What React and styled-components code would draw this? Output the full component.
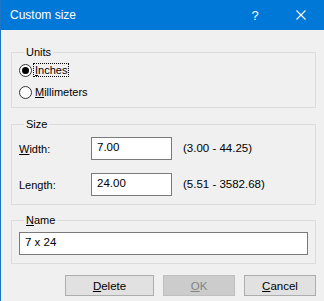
import React from 'react';
import styled, { createGlobalStyle } from 'styled-components';

/* Global */
const GlobalStyle = createGlobalStyle`
  html, body {
    margin: 0;
    padding: 0;
    background: #f0f0f0;
  }
  body {
    font-family: "Liberation Sans", Arial, sans-serif;
    font-size: 11px;
    color: #000;
  }
`;

/* Window chrome */
const Window = styled.div`
  width: 324px;
  height: 301px;
  box-sizing: border-box;
  border-left: 1px solid #1f75c4;
  background: #f0f0f0;
  display: flex;
  flex-direction: column;
  overflow: hidden;
`;
const TitleBar = styled.div`
  height: 30px;
  flex: none;
  display: flex;
  align-items: center;
  background: #0078d7;
  color: #fff;
  padding-left: 9px;
`;
const Title = styled.div`
  flex: 1;
  font-size: 12px;
`;
const CaptionButton = styled.div`
  width: 46px;
  height: 30px;
  display: flex;
  align-items: center;
  justify-content: center;
  font-size: 13px;
`;

/* Body */
const Body = styled.div`
  padding: 16px 8px 0 10px;
  display: flex;
  flex-direction: column;
`;
const Group = styled.fieldset`
  margin: ${p => p.$mt || 0}px 0 0 0;
  padding: ${p => p.$pt}px 7px ${p => p.$pb}px 7px;
  border: 1px solid #dcdcdc;
  min-width: 0;
`;
const Legend = styled.legend`
  padding: 0 2px;
  margin-left: 5px;
  line-height: 13px;
  font-size: 11px;
`;
const Key = styled.span`
  text-decoration: underline;
`;

/* Radios */
const RadioRow = styled.div`
  height: 22px;
  display: flex;
  align-items: center;
  gap: 2px;
`;
const RadioCircle = styled.span`
  width: 11px;
  height: 11px;
  border: 1px solid #333;
  border-radius: 50%;
  background: #fff;
  display: flex;
  align-items: center;
  justify-content: center;
  &::after {
    content: '';
    display: ${p => (p.$checked ? 'block' : 'none')};
    width: 7px;
    height: 7px;
    border-radius: 50%;
    background: #000;
  }
`;
const RadioLabel = styled.span`
  padding: 0 1px;
  line-height: 12px;
  outline: ${p => (p.$focused ? '1px dotted #000' : 'none')};
`;

/* Size grid */
const SizeGrid = styled.div`
  display: grid;
  grid-template-columns: 72px 81px auto;
  row-gap: 13px;
  align-items: center;
`;
const TextBox = styled.div`
  height: ${p => p.$h || 23}px;
  box-sizing: border-box;
  border: 1px solid #7a7a7a;
  background: #fff;
  padding: 2px 5px 0;
  line-height: 15px;
  font-size: 11.5px;
`;
const Range = styled.span`
  margin-top: -2px;
  padding-left: 11px;
  font-size: 11.5px;
`;

/* Buttons */
const ButtonRow = styled.div`
  margin-top: 11px;
  display: flex;
  justify-content: flex-end;
  gap: 9px;
`;
const Button = styled.div`
  width: ${p => p.$w}px;
  height: 21px;
  box-sizing: border-box;
  display: flex;
  align-items: center;
  justify-content: center;
  border: 1px solid ${p => (p.$disabled ? '#bfbfbf' : '#adadad')};
  background: ${p => (p.$disabled ? '#cccccc' : '#e1e1e1')};
  color: ${p => (p.$disabled ? '#838383' : '#000')};
  font-size: 11.5px;
`;

const CloseIcon = () => (
  <svg width="10" height="10" viewBox="0 0 10 10">
    <path d="M0.5 0.5 L9.5 9.5 M9.5 0.5 L0.5 9.5" stroke="#fff" strokeWidth="1.1" fill="none" />
  </svg>
);

export default function App() {
  return (
    <>
      <GlobalStyle />
      <Window>
        <TitleBar>
          <Title>Custom size</Title>
          <CaptionButton>?</CaptionButton>
          <CaptionButton><CloseIcon /></CaptionButton>
        </TitleBar>

        <Body>
          <Group $pt={0} $pb={4}>
            <Legend>Units</Legend>
            <RadioRow>
              <RadioCircle $checked />
              <RadioLabel $focused><Key>I</Key>nches</RadioLabel>
            </RadioRow>
            <RadioRow>
              <RadioCircle />
              <RadioLabel><Key>M</Key>illimeters</RadioLabel>
            </RadioRow>
          </Group>

          <Group $mt={10} $pt={6} $pb={8}>
            <Legend>Size</Legend>
            <SizeGrid>
              <span><Key>W</Key>idth:</span>
              <TextBox>7.00</TextBox>
              <Range>(3.00 - 44.25)</Range>
              <span>Len<Key>g</Key>th:</span>
              <TextBox>24.00</TextBox>
              <Range>(5.51 - 3582.68)</Range>
            </SizeGrid>
          </Group>

          <Group $mt={9} $pt={5} $pb={8}>
            <Legend><Key>N</Key>ame</Legend>
            <TextBox $h={23}>7 x 24</TextBox>
          </Group>

          <ButtonRow>
            <Button $w={89}><span><Key>D</Key>elete</span></Button>
            <Button $w={72} $disabled><span><Key>O</Key>K</span></Button>
            <Button $w={72}><span><Key>C</Key>ancel</span></Button>
          </ButtonRow>
        </Body>
      </Window>
    </>
  );
}
